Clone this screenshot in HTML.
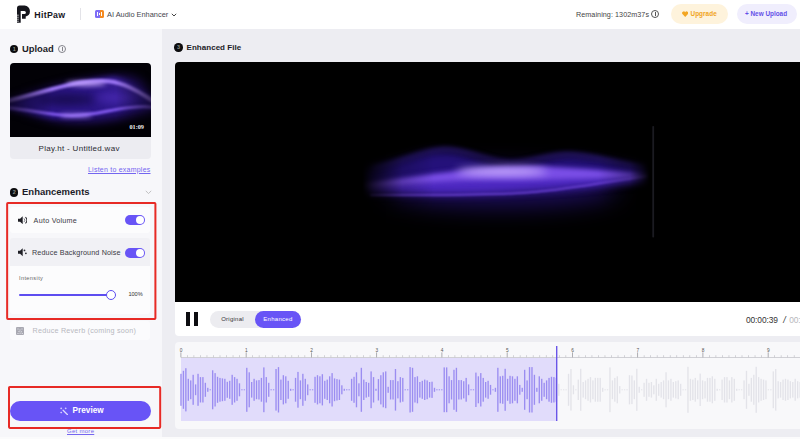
<!DOCTYPE html>
<html><head><meta charset="utf-8">
<style>
*{margin:0;padding:0;box-sizing:border-box}
html,body{width:800px;height:439px;overflow:hidden;background:#ededf2;font-family:"Liberation Sans",sans-serif;color:#1c1c28}
.abs{position:absolute}
#hdr{position:absolute;left:0;top:0;width:800px;height:29px;background:#fff}
#side{position:absolute;left:0;top:29px;width:162px;height:410px;background:#f7f7fa}
.t{position:absolute;white-space:nowrap;line-height:1}
.b{font-weight:bold}
.bul{position:absolute;width:8.4px;height:8.4px;border-radius:50%;background:#0c0c0e;color:#8a8f8a;font-size:5.5px;font-weight:bold;text-align:center;line-height:8.4px}
.tog{position:absolute;width:20px;height:10px;border-radius:5px;background:#6854f6}
.tog i{position:absolute;right:1px;top:1px;width:8px;height:8px;border-radius:50%;background:#fff}
.red{position:absolute;border:1.5px solid #e8252a}
</style></head><body>
<div id="hdr">
 <svg class="abs" style="left:0;top:0" width="40" height="29" viewBox="0 0 40 29"><path d="M17 8.2 Q17 5.6 19.6 5.6 H24.6 A5.3 5.3 0 0 1 29.9 10.9 V11.6 A5 5 0 0 1 25.7 16.5 V18.8 H22 V14.1 H24.3 A1.6 1.6 0 0 0 24.3 10.9 H20.7 V22.7 H17 Z" fill="#15151c"/><path d="M17 15.2h1.8M17 17.2h1.8M17 19.2h1.8M17 21.2h1.8" stroke="#fff" stroke-width=".7"/></svg>
 <div class="t b" style="left:34.3px;top:10.6px;font-size:8.8px;letter-spacing:.3px;color:#16161e">HitPaw</div>
 <div class="abs" style="left:80px;top:8px;width:1px;height:12px;background:#e3e3e8"></div>
 <div class="abs" style="left:95px;top:9.5px;width:4.5px;height:8.5px;background:#7d6cf6;border-radius:1.5px 0 0 1.5px"></div>
 <div class="abs" style="left:99.5px;top:9.5px;width:4.5px;height:8.5px;background:#f58a20;border-radius:0 1.5px 1.5px 0"></div>
 <div class="abs" style="left:97.3px;top:12px;width:1px;height:3.5px;background:#fff"></div><div class="abs" style="left:99.2px;top:12.5px;width:.8px;height:1px;background:#fff"></div><div class="abs" style="left:99.2px;top:14.3px;width:.8px;height:1px;background:#fff"></div><div class="abs" style="left:101px;top:12px;width:1px;height:3.5px;background:#fff"></div>
 <div class="t" style="left:107px;top:10.5px;font-size:7.4px;color:#45454d">AI Audio Enhancer</div>
 <svg class="abs" style="left:171.3px;top:12.8px" width="6" height="4" viewBox="0 0 6 4"><path d="M.8 .8 L3 3 L5.2 .8" fill="none" stroke="#444" stroke-width="1"/></svg>
 <div class="t" style="left:576px;top:10.5px;font-size:7.2px;letter-spacing:.06px;color:#444">Remaining: 1302m37s</div>
 <div class="abs" style="left:651px;top:10px;width:8px;height:8px;border:1px solid #555;border-radius:50%"></div>
 <div class="abs" style="left:654.5px;top:12px;width:1px;height:4px;background:#555"></div>
 <div class="abs" style="left:670.5px;top:4px;width:57.5px;height:19.5px;border-radius:10px;background:#fef3dc"></div>
 <svg class="abs" style="left:682px;top:11px" width="6.4" height="6" viewBox="0 0 12 11"><path d="M6 11 L.8 5.6 A3 3 0 0 1 6 2 A3 3 0 0 1 11.2 5.6 Z" fill="#f3a622"/></svg>
 <div class="t b" style="left:690.5px;top:11px;font-size:6.4px;letter-spacing:.05px;color:#f0a321">Upgrade</div>
 <div class="abs" style="left:737px;top:4px;width:59.5px;height:19.5px;border-radius:10px;background:#f0eefd"></div>
 <div class="t b" style="left:745px;top:11px;font-size:6.4px;color:#6350e8">+ New Upload</div>
</div>
<div id="side"></div>

<!-- Upload -->
<div class="bul" style="left:10px;top:44.5px">1</div>
<div class="t b" style="left:22px;top:43.8px;font-size:9.4px">Upload</div>
<div class="abs" style="left:58px;top:45px;width:8px;height:8px;border:1px solid #85858c;border-radius:50%"></div>
<div class="abs" style="left:61.5px;top:47px;width:1px;height:4px;background:#85858c"></div>

<div class="abs" style="left:10px;top:63px;width:140.5px;height:95.5px;border-radius:4px;background:#ececf1"></div>
<svg class="abs" style="left:10px;top:63px;border-radius:4px 4px 0 0" width="141" height="74" viewBox="0 0.5 141 74">
 <defs><filter color-interpolation-filters="sRGB" id="b0" x="-40%" y="-300%" width="180%" height="700%"><feGaussianBlur stdDeviation="5"/></filter>
 <filter color-interpolation-filters="sRGB" id="b1" x="-30%" y="-300%" width="160%" height="700%"><feGaussianBlur stdDeviation="2.4"/></filter>
 <filter color-interpolation-filters="sRGB" id="b2" x="-20%" y="-80%" width="140%" height="260%"><feGaussianBlur stdDeviation="1.3"/></filter>
 <linearGradient id="tg" x1="0" x2="141" gradientUnits="userSpaceOnUse"><stop offset="0" stop-color="#555"/><stop offset=".3" stop-color="#fff"/><stop offset=".75" stop-color="#fff"/><stop offset="1" stop-color="#666"/></linearGradient>
 <mask id="tm" maskUnits="userSpaceOnUse" x="0" y="0" width="141" height="75"><rect width="141" height="75" fill="url(#tg)"/></mask></defs>
 <rect width="141" height="75" fill="#020106"/>
 <g mask="url(#tm)">
 <path filter="url(#b0)" d="M-5 38 C30 28 60 18 100 14 S135 26 146 36 L146 50 C120 54 90 62 62 60 S20 50 -5 46 Z" fill="#24106c"/>
 <path filter="url(#b1)" d="M-5 40 C25 34 50 24 72 21 S110 20 125 27 S140 36 146 38 L146 46 C120 46 95 52 64 55 S20 50 -5 46 Z" fill="#2c1688"/>
 <ellipse filter="url(#b0)" cx="56" cy="37" rx="30" ry="5" fill="#150a4a"/>
 <ellipse filter="url(#b0)" cx="108" cy="35" rx="22" ry="6" fill="#4527ac"/>
 <path filter="url(#b1)" d="M60 24 C80 18 95 14 105 15 S130 26 146 38 L146 42 C130 38 115 26 95 24 Z" fill="#3a2096"/>
 <path filter="url(#b2)" d="M-5 39 C25 32 50 23 72 20 S105 18 120 25 S138 36 146 40" fill="none" stroke="#9a74f2" stroke-width="4"/>
 <path filter="url(#b2)" d="M-5 45 C20 47 40 53 62 53 S100 47 120 45 S140 45 146 45" fill="none" stroke="#7e56e8" stroke-width="3.2"/>
 <ellipse filter="url(#b1)" cx="76" cy="21" rx="20" ry="2.2" fill="#c8aaff"/>
 <ellipse filter="url(#b1)" cx="66" cy="53" rx="16" ry="1.6" fill="#b08cf8"/>
 </g>
</svg>
<div class="t b" style="left:129.5px;top:123.5px;font-size:6.2px;color:#f4f4f4;font-family:'Liberation Serif',serif">01:09</div>
<div class="t" style="left:38.6px;top:144.7px;font-size:8px;letter-spacing:.3px;color:#2a2a32">Play.ht - Untitled.wav</div>
<div class="t" style="left:88px;top:165.7px;font-size:7px;letter-spacing:.23px;color:#7466f0;text-decoration:underline">Listen to examples</div>

<!-- Enhancements -->
<div class="bul" style="left:10px;top:188.2px">2</div>
<div class="t b" style="left:22px;top:187.4px;font-size:9.5px">Enhancements</div>
<svg class="abs" style="left:144.5px;top:190px" width="7" height="5" viewBox="0 0 7 5"><path d="M.8 .8 L3.5 3.6 L6.2 .8" fill="none" stroke="#bbb" stroke-width=".9"/></svg>

<div class="abs" style="left:10px;top:207px;width:140px;height:26px;background:#fcfcfd;border-radius:3px"></div>
<div class="abs" style="left:10px;top:238px;width:140px;height:28px;background:#f1f1f5;border-radius:3px 3px 0 0"></div>
<div class="abs" style="left:10px;top:266px;width:140px;height:48px;background:#fcfcfd;border-radius:0 0 3px 3px"></div>
<div class="abs" style="left:10px;top:321px;width:140px;height:19px;background:#fbfbfd;border-radius:3px"></div>

<svg class="abs" style="left:17.6px;top:215.9px" width="9.4" height="8.5" viewBox="0 0 10 9"><path d="M0 2.9 H2.2 L5 .3 V8.7 L2.2 6.1 H0 Z" fill="#1e1e24"/><path d="M6.3 2.5 A2.8 2.8 0 0 1 6.3 6.5" fill="none" stroke="#77777e" stroke-width="1"/><path d="M7.9 1.1 A4.4 4.4 0 0 1 7.9 7.9" fill="none" stroke="#2a2a30" stroke-width="1.1"/></svg>
<div class="t" style="left:33.6px;top:216.5px;font-size:7.2px;letter-spacing:.25px;color:#3a3a44">Auto Volume</div>
<div class="tog" style="left:125px;top:215px"><i></i></div>

<svg class="abs" style="left:18px;top:248.4px" width="9.4" height="8.5" viewBox="0 0 10 9"><path d="M0 2.9 H2.2 L5 .3 V8.7 L2.2 6.1 H0 Z" fill="#1e1e24"/><circle cx="6.9" cy="2.6" r=".95" fill="#2a2a30"/><circle cx="8.4" cy="5.6" r=".95" fill="#2a2a30"/></svg>
<div class="t" style="left:32px;top:249.3px;font-size:7.2px;letter-spacing:.14px;color:#3a3a44">Reduce Background Noise</div>
<div class="tog" style="left:125px;top:248px"><i></i></div>

<div class="t" style="left:19px;top:276px;font-size:5.6px;letter-spacing:.38px;color:#666">Intensity</div>
<div class="abs" style="left:19px;top:293.6px;width:89px;height:2.6px;border-radius:1.3px;background:#5d4df0"></div>
<div class="abs" style="left:105.6px;top:289.6px;width:10px;height:10px;border-radius:50%;background:#fff;border:1.2px solid #5d4df0"></div>
<div class="t" style="left:128.4px;top:292px;font-size:5.6px;color:#333">100%</div>

<svg class="abs" style="left:16.4px;top:327px" width="8" height="8" viewBox="0 0 8 8"><rect width="8" height="8" rx="1" fill="#a9a9b2"/><path d="M1.5 1.5h1v1h-1zM3.5 2.5h1v1h-1zM5.5 1.5h1v1h-1zM2.5 4h1v1h-1zM4.8 4.2h1v1h-1zM1.5 6h1v1h-1zM3.6 5.8h1v1h-1zM5.8 6h1v1h-1z" fill="#e8e8ee"/></svg>
<div class="t" style="left:32.6px;top:326.9px;font-size:7.2px;letter-spacing:.22px;color:#b8b8c0">Reduce Reverb (coming soon)</div>

<svg class="abs" style="left:0;top:190px" width="170" height="250" viewBox="0 190 170 250"><rect x="7.15" y="203" width="148.25" height="116" rx=".8" fill="none" stroke="#e72a25" stroke-width="2"/><rect x="9" y="386.9" width="151.2" height="41" rx=".8" fill="none" stroke="#e72a25" stroke-width="2"/></svg>

<!-- Preview -->
<div class="abs" style="left:10px;top:401.2px;width:141.2px;height:20px;border-radius:10px;background:#6854f6"></div>
<svg class="abs" style="left:59.5px;top:406.6px" width="8.6" height="8.6" viewBox="0 0 10 10"><path d="M3.6 3.8 L8.8 9" stroke="#ddd8ff" stroke-width="1.5" stroke-linecap="round"/><path d="M1.4 .6v2M.4 1.6h2M6.6 .6v2M5.6 1.6h2M1.4 5.4v2M.4 6.4h2" stroke="#ddd8ff" stroke-width=".9"/></svg>
<div class="t b" style="left:72.5px;top:406.8px;font-size:8.2px;letter-spacing:.04px;color:#fff">Preview</div>
<div class="t" style="left:67px;top:427.9px;font-size:6px;letter-spacing:.28px;color:#7466f0;text-decoration:underline">Get more</div>


<!-- main -->
<div class="bul" style="left:174.3px;top:43.4px">3</div>
<div class="t b" style="left:186.5px;top:43.7px;font-size:8px;letter-spacing:.04px">Enhanced File</div>

<div class="abs" style="left:174.6px;top:61.8px;width:626px;height:240.6px;background:#000;border-radius:4px 0 0 0"></div>
<svg class="abs" style="left:174px;top:61px" width="626" height="242" viewBox="174 61 626 242">
 <defs><filter color-interpolation-filters="sRGB" id="c0" x="-30%" y="-300%" width="160%" height="700%"><feGaussianBlur stdDeviation="12"/></filter>
 <filter color-interpolation-filters="sRGB" id="c1" x="-20%" y="-100%" width="140%" height="300%"><feGaussianBlur stdDeviation="5"/></filter>
 <filter color-interpolation-filters="sRGB" id="c2" x="-20%" y="-100%" width="140%" height="300%"><feGaussianBlur stdDeviation="2.5"/></filter>
 <filter color-interpolation-filters="sRGB" id="c4" x="-20%" y="-100%" width="140%" height="300%"><feGaussianBlur stdDeviation="1.3"/></filter>
 <filter color-interpolation-filters="sRGB" id="c3" x="-30%" y="-300%" width="160%" height="700%"><feGaussianBlur stdDeviation="4"/></filter>
 <linearGradient id="mg" x1="362" x2="650" gradientUnits="userSpaceOnUse"><stop offset="0" stop-color="#000"/><stop offset=".04" stop-color="#444"/><stop offset=".14" stop-color="#ccc"/><stop offset=".25" stop-color="#fff"/><stop offset=".82" stop-color="#fff"/><stop offset=".93" stop-color="#bbb"/><stop offset="1" stop-color="#000"/></linearGradient>
 <mask id="mk" maskUnits="userSpaceOnUse" x="174" y="61" width="626" height="242"><rect x="362" y="61" width="288" height="242" fill="url(#mg)"/></mask></defs>
 <g mask="url(#mk)">
  <ellipse filter="url(#c0)" cx="500" cy="188" rx="120" ry="18" fill="#1e0e60"/>
  <path filter="url(#c1)" d="M360 170 C400 162 422 151 444 151 S490 167 510 167 S548 156 568 156 S620 164 650 168 L650 180 C620 184 590 186 560 188 S470 190 440 190 S390 188 360 190 Z" fill="#24117a"/>
  <path d="M372 168 C405 161 424 149 446 149 S490 162 510 162 S548 154 568 154 S615 162 645 168" fill="none" stroke="#3c2498" stroke-width="1.8" filter="url(#c2)"/>
  <path filter="url(#c3)" d="M365 185 C400 181 450 175 500 173 S600 174 650 176 L650 179 C610 184 575 188 510 192 S400 192 365 193 Z" fill="#4e29c2"/>
  <path filter="url(#c2)" d="M362 184 C400 180 450 170 500 167 S600 171 650 175 L650 177 C600 178 560 180 500 180 S400 186 362 187 Z" fill="#7a4ee6"/>
  <path filter="url(#c4)" d="M370 195 C420 195 470 196 520 193 S600 182 648 176" fill="none" stroke="#7448e0" stroke-width="1.5"/>
  <ellipse filter="url(#c3)" cx="502" cy="171.5" rx="46" ry="3.5" fill="#d4baff"/>
 </g>
 <rect x="652.3" y="126" width="1.8" height="111.5" rx=".8" fill="#1b1b21"/>
</svg>

<div class="abs" style="left:174.6px;top:302.4px;width:626px;height:33.3px;background:#fff;border-radius:0 0 0 4px"></div>
<div class="abs" style="left:186px;top:312px;width:4px;height:14px;background:#0c0c10"></div>
<div class="abs" style="left:194px;top:312px;width:4px;height:14px;background:#0c0c10"></div>
<div class="abs" style="left:209.5px;top:310.5px;width:91px;height:17.5px;border-radius:9px;background:#ececf0"></div>
<div class="abs" style="left:254.5px;top:310.5px;width:46px;height:17.5px;border-radius:9px;background:#6854f6"></div>
<div class="t" style="left:221.2px;top:316px;font-size:6px;letter-spacing:.25px;color:#333">Original</div>
<div class="t" style="left:263.2px;top:316px;font-size:6px;letter-spacing:.3px;color:#fff">Enhanced</div>
<div class="t" style="left:746px;top:315.7px;font-size:8.4px;letter-spacing:-.1px;color:#333">00:00:39</div>
<div class="t" style="left:783.2px;top:315.5px;font-size:8.8px;font-style:italic;color:#333">/</div>
<div class="t" style="left:789.2px;top:315.7px;font-size:8.4px;letter-spacing:-.1px;color:#b8b8bc">00:01:09</div>

<div class="abs" style="left:174.6px;top:341.7px;width:626px;height:87.2px;background:#f8f8fa;border-radius:4px 0 0 4px"></div>
<div class="abs" style="left:180.5px;top:358.4px;width:376px;height:62.2px;background:#e1dcfb"></div>
<div class="abs" style="left:180.5px;top:357px;width:620px;height:1px;background:#d0d0d5"></div>
<svg class="abs" style="left:0;top:0" width="800" height="439" viewBox="0 0 800 439">
<rect x="180.50" y="352.4" width="0.8" height="5" fill="#9a9aa0"/><text x="179.80" y="351.5" font-size="4.8" fill="#555" font-family="Liberation Sans">0</text><rect x="187.03" y="355.2" width="0.7" height="2.2" fill="#c2c2c8"/><rect x="193.55" y="355.2" width="0.7" height="2.2" fill="#c2c2c8"/><rect x="200.07" y="355.2" width="0.7" height="2.2" fill="#c2c2c8"/><rect x="206.60" y="355.2" width="0.7" height="2.2" fill="#c2c2c8"/><rect x="213.12" y="355.2" width="0.7" height="2.2" fill="#c2c2c8"/><rect x="219.65" y="355.2" width="0.7" height="2.2" fill="#c2c2c8"/><rect x="226.18" y="355.2" width="0.7" height="2.2" fill="#c2c2c8"/><rect x="232.70" y="355.2" width="0.7" height="2.2" fill="#c2c2c8"/><rect x="239.22" y="355.2" width="0.7" height="2.2" fill="#c2c2c8"/><rect x="245.75" y="352.4" width="0.8" height="5" fill="#9a9aa0"/><text x="245.05" y="351.5" font-size="4.8" fill="#555" font-family="Liberation Sans">1</text><rect x="252.28" y="355.2" width="0.7" height="2.2" fill="#c2c2c8"/><rect x="258.80" y="355.2" width="0.7" height="2.2" fill="#c2c2c8"/><rect x="265.32" y="355.2" width="0.7" height="2.2" fill="#c2c2c8"/><rect x="271.85" y="355.2" width="0.7" height="2.2" fill="#c2c2c8"/><rect x="278.38" y="355.2" width="0.7" height="2.2" fill="#c2c2c8"/><rect x="284.90" y="355.2" width="0.7" height="2.2" fill="#c2c2c8"/><rect x="291.43" y="355.2" width="0.7" height="2.2" fill="#c2c2c8"/><rect x="297.95" y="355.2" width="0.7" height="2.2" fill="#c2c2c8"/><rect x="304.48" y="355.2" width="0.7" height="2.2" fill="#c2c2c8"/><rect x="311.00" y="352.4" width="0.8" height="5" fill="#9a9aa0"/><text x="310.30" y="351.5" font-size="4.8" fill="#555" font-family="Liberation Sans">2</text><rect x="317.52" y="355.2" width="0.7" height="2.2" fill="#c2c2c8"/><rect x="324.05" y="355.2" width="0.7" height="2.2" fill="#c2c2c8"/><rect x="330.58" y="355.2" width="0.7" height="2.2" fill="#c2c2c8"/><rect x="337.10" y="355.2" width="0.7" height="2.2" fill="#c2c2c8"/><rect x="343.62" y="355.2" width="0.7" height="2.2" fill="#c2c2c8"/><rect x="350.15" y="355.2" width="0.7" height="2.2" fill="#c2c2c8"/><rect x="356.68" y="355.2" width="0.7" height="2.2" fill="#c2c2c8"/><rect x="363.20" y="355.2" width="0.7" height="2.2" fill="#c2c2c8"/><rect x="369.73" y="355.2" width="0.7" height="2.2" fill="#c2c2c8"/><rect x="376.25" y="352.4" width="0.8" height="5" fill="#9a9aa0"/><text x="375.55" y="351.5" font-size="4.8" fill="#555" font-family="Liberation Sans">3</text><rect x="382.77" y="355.2" width="0.7" height="2.2" fill="#c2c2c8"/><rect x="389.30" y="355.2" width="0.7" height="2.2" fill="#c2c2c8"/><rect x="395.83" y="355.2" width="0.7" height="2.2" fill="#c2c2c8"/><rect x="402.35" y="355.2" width="0.7" height="2.2" fill="#c2c2c8"/><rect x="408.88" y="355.2" width="0.7" height="2.2" fill="#c2c2c8"/><rect x="415.40" y="355.2" width="0.7" height="2.2" fill="#c2c2c8"/><rect x="421.93" y="355.2" width="0.7" height="2.2" fill="#c2c2c8"/><rect x="428.45" y="355.2" width="0.7" height="2.2" fill="#c2c2c8"/><rect x="434.98" y="355.2" width="0.7" height="2.2" fill="#c2c2c8"/><rect x="441.50" y="352.4" width="0.8" height="5" fill="#9a9aa0"/><text x="440.80" y="351.5" font-size="4.8" fill="#555" font-family="Liberation Sans">4</text><rect x="448.03" y="355.2" width="0.7" height="2.2" fill="#c2c2c8"/><rect x="454.55" y="355.2" width="0.7" height="2.2" fill="#c2c2c8"/><rect x="461.07" y="355.2" width="0.7" height="2.2" fill="#c2c2c8"/><rect x="467.60" y="355.2" width="0.7" height="2.2" fill="#c2c2c8"/><rect x="474.12" y="355.2" width="0.7" height="2.2" fill="#c2c2c8"/><rect x="480.65" y="355.2" width="0.7" height="2.2" fill="#c2c2c8"/><rect x="487.18" y="355.2" width="0.7" height="2.2" fill="#c2c2c8"/><rect x="493.70" y="355.2" width="0.7" height="2.2" fill="#c2c2c8"/><rect x="500.23" y="355.2" width="0.7" height="2.2" fill="#c2c2c8"/><rect x="506.75" y="352.4" width="0.8" height="5" fill="#9a9aa0"/><text x="506.05" y="351.5" font-size="4.8" fill="#555" font-family="Liberation Sans">5</text><rect x="513.28" y="355.2" width="0.7" height="2.2" fill="#c2c2c8"/><rect x="519.80" y="355.2" width="0.7" height="2.2" fill="#c2c2c8"/><rect x="526.33" y="355.2" width="0.7" height="2.2" fill="#c2c2c8"/><rect x="532.85" y="355.2" width="0.7" height="2.2" fill="#c2c2c8"/><rect x="539.38" y="355.2" width="0.7" height="2.2" fill="#c2c2c8"/><rect x="545.90" y="355.2" width="0.7" height="2.2" fill="#c2c2c8"/><rect x="552.42" y="355.2" width="0.7" height="2.2" fill="#c2c2c8"/><rect x="558.95" y="355.2" width="0.7" height="2.2" fill="#c2c2c8"/><rect x="565.48" y="355.2" width="0.7" height="2.2" fill="#c2c2c8"/><rect x="572.00" y="352.4" width="0.8" height="5" fill="#9a9aa0"/><text x="571.30" y="351.5" font-size="4.8" fill="#555" font-family="Liberation Sans">6</text><rect x="578.53" y="355.2" width="0.7" height="2.2" fill="#c2c2c8"/><rect x="585.05" y="355.2" width="0.7" height="2.2" fill="#c2c2c8"/><rect x="591.58" y="355.2" width="0.7" height="2.2" fill="#c2c2c8"/><rect x="598.10" y="355.2" width="0.7" height="2.2" fill="#c2c2c8"/><rect x="604.62" y="355.2" width="0.7" height="2.2" fill="#c2c2c8"/><rect x="611.15" y="355.2" width="0.7" height="2.2" fill="#c2c2c8"/><rect x="617.67" y="355.2" width="0.7" height="2.2" fill="#c2c2c8"/><rect x="624.20" y="355.2" width="0.7" height="2.2" fill="#c2c2c8"/><rect x="630.73" y="355.2" width="0.7" height="2.2" fill="#c2c2c8"/><rect x="637.25" y="352.4" width="0.8" height="5" fill="#9a9aa0"/><text x="636.55" y="351.5" font-size="4.8" fill="#555" font-family="Liberation Sans">7</text><rect x="643.78" y="355.2" width="0.7" height="2.2" fill="#c2c2c8"/><rect x="650.30" y="355.2" width="0.7" height="2.2" fill="#c2c2c8"/><rect x="656.83" y="355.2" width="0.7" height="2.2" fill="#c2c2c8"/><rect x="663.35" y="355.2" width="0.7" height="2.2" fill="#c2c2c8"/><rect x="669.88" y="355.2" width="0.7" height="2.2" fill="#c2c2c8"/><rect x="676.40" y="355.2" width="0.7" height="2.2" fill="#c2c2c8"/><rect x="682.92" y="355.2" width="0.7" height="2.2" fill="#c2c2c8"/><rect x="689.45" y="355.2" width="0.7" height="2.2" fill="#c2c2c8"/><rect x="695.98" y="355.2" width="0.7" height="2.2" fill="#c2c2c8"/><rect x="702.50" y="352.4" width="0.8" height="5" fill="#9a9aa0"/><text x="701.80" y="351.5" font-size="4.8" fill="#555" font-family="Liberation Sans">8</text><rect x="709.02" y="355.2" width="0.7" height="2.2" fill="#c2c2c8"/><rect x="715.55" y="355.2" width="0.7" height="2.2" fill="#c2c2c8"/><rect x="722.08" y="355.2" width="0.7" height="2.2" fill="#c2c2c8"/><rect x="728.60" y="355.2" width="0.7" height="2.2" fill="#c2c2c8"/><rect x="735.12" y="355.2" width="0.7" height="2.2" fill="#c2c2c8"/><rect x="741.65" y="355.2" width="0.7" height="2.2" fill="#c2c2c8"/><rect x="748.18" y="355.2" width="0.7" height="2.2" fill="#c2c2c8"/><rect x="754.70" y="355.2" width="0.7" height="2.2" fill="#c2c2c8"/><rect x="761.23" y="355.2" width="0.7" height="2.2" fill="#c2c2c8"/><rect x="767.75" y="352.4" width="0.8" height="5" fill="#9a9aa0"/><text x="767.05" y="351.5" font-size="4.8" fill="#555" font-family="Liberation Sans">9</text><rect x="774.27" y="355.2" width="0.7" height="2.2" fill="#c2c2c8"/><rect x="780.80" y="355.2" width="0.7" height="2.2" fill="#c2c2c8"/><rect x="787.33" y="355.2" width="0.7" height="2.2" fill="#c2c2c8"/><rect x="793.85" y="355.2" width="0.7" height="2.2" fill="#c2c2c8"/>
<g fill="#9b8df1"><rect x="180.30" y="373.8" width="1.35" height="32.0"/><rect x="182.74" y="370.8" width="1.35" height="38.0"/><rect x="185.18" y="368.2" width="1.35" height="43.2"/><rect x="187.61" y="378.8" width="1.35" height="22.0"/><rect x="190.05" y="380.4" width="1.35" height="18.8"/><rect x="192.49" y="374.8" width="1.35" height="30.0"/><rect x="194.93" y="384.4" width="1.35" height="10.8"/><rect x="197.36" y="373.8" width="1.35" height="32.0"/><rect x="199.80" y="377.1" width="1.35" height="25.4"/><rect x="202.24" y="377.1" width="1.35" height="25.4"/><rect x="204.68" y="382.8" width="1.35" height="14.0"/><rect x="207.11" y="387.8" width="1.35" height="4.0"/><rect x="209.55" y="389.3" width="1.35" height="1.0"/><rect x="211.99" y="370.3" width="1.35" height="39.0"/><rect x="214.43" y="373.1" width="1.35" height="33.4"/><rect x="216.86" y="376.8" width="1.35" height="26.0"/><rect x="219.30" y="377.9" width="1.35" height="23.8"/><rect x="221.74" y="378.4" width="1.35" height="22.8"/><rect x="224.18" y="378.8" width="1.35" height="22.0"/><rect x="226.61" y="381.8" width="1.35" height="16.0"/><rect x="229.05" y="380.8" width="1.35" height="18.0"/><rect x="231.49" y="374.8" width="1.35" height="30.0"/><rect x="233.93" y="377.1" width="1.35" height="25.4"/><rect x="236.36" y="378.8" width="1.35" height="22.0"/><rect x="238.80" y="383.3" width="1.35" height="13.0"/><rect x="241.24" y="389.3" width="1.35" height="1.0"/><rect x="243.68" y="389.3" width="1.35" height="1.0"/><rect x="246.11" y="367.8" width="1.35" height="44.0"/><rect x="248.55" y="372.3" width="1.35" height="35.0"/><rect x="250.99" y="382.0" width="1.35" height="15.6"/><rect x="253.43" y="378.8" width="1.35" height="22.0"/><rect x="255.86" y="380.4" width="1.35" height="18.8"/><rect x="258.30" y="380.1" width="1.35" height="19.4"/><rect x="260.74" y="377.9" width="1.35" height="23.8"/><rect x="263.18" y="367.4" width="1.35" height="44.8"/><rect x="265.61" y="377.1" width="1.35" height="25.4"/><rect x="268.05" y="382.8" width="1.35" height="14.0"/><rect x="270.49" y="389.3" width="1.35" height="1.0"/><rect x="272.93" y="389.3" width="1.35" height="1.0"/><rect x="275.36" y="369.0" width="1.35" height="41.6"/><rect x="277.80" y="367.1" width="1.35" height="45.4"/><rect x="280.24" y="379.6" width="1.35" height="20.4"/><rect x="282.68" y="375.2" width="1.35" height="29.2"/><rect x="285.11" y="376.3" width="1.35" height="27.0"/><rect x="287.55" y="380.8" width="1.35" height="18.0"/><rect x="289.99" y="388.8" width="1.35" height="2.0"/><rect x="292.43" y="389.3" width="1.35" height="1.0"/><rect x="294.86" y="377.9" width="1.35" height="23.8"/><rect x="297.30" y="371.9" width="1.35" height="35.8"/><rect x="299.74" y="380.4" width="1.35" height="18.8"/><rect x="302.18" y="373.8" width="1.35" height="32.0"/><rect x="304.61" y="378.8" width="1.35" height="22.0"/><rect x="307.05" y="384.4" width="1.35" height="10.8"/><rect x="309.49" y="389.3" width="1.35" height="1.0"/><rect x="311.93" y="389.3" width="1.35" height="1.0"/><rect x="314.36" y="376.8" width="1.35" height="26.0"/><rect x="316.80" y="375.2" width="1.35" height="29.2"/><rect x="319.24" y="376.3" width="1.35" height="27.0"/><rect x="321.68" y="374.2" width="1.35" height="31.2"/><rect x="324.11" y="380.8" width="1.35" height="18.0"/><rect x="326.55" y="379.6" width="1.35" height="20.4"/><rect x="328.99" y="376.3" width="1.35" height="27.0"/><rect x="331.43" y="373.1" width="1.35" height="33.4"/><rect x="333.86" y="378.4" width="1.35" height="22.8"/><rect x="336.30" y="379.1" width="1.35" height="21.4"/><rect x="338.74" y="379.6" width="1.35" height="20.4"/><rect x="341.18" y="385.3" width="1.35" height="9.0"/><rect x="343.61" y="388.8" width="1.35" height="2.0"/><rect x="346.05" y="389.3" width="1.35" height="1.0"/><rect x="348.49" y="389.3" width="1.35" height="1.0"/><rect x="350.93" y="378.8" width="1.35" height="22.0"/><rect x="353.36" y="376.8" width="1.35" height="26.0"/><rect x="355.80" y="372.3" width="1.35" height="35.0"/><rect x="358.24" y="383.3" width="1.35" height="13.0"/><rect x="360.68" y="367.8" width="1.35" height="44.0"/><rect x="363.11" y="379.6" width="1.35" height="20.4"/><rect x="365.55" y="382.0" width="1.35" height="15.6"/><rect x="367.99" y="382.8" width="1.35" height="14.0"/><rect x="370.43" y="371.4" width="1.35" height="36.8"/><rect x="372.86" y="377.1" width="1.35" height="25.4"/><rect x="375.30" y="388.8" width="1.35" height="2.0"/><rect x="377.74" y="379.1" width="1.35" height="21.4"/><rect x="380.18" y="375.2" width="1.35" height="29.2"/><rect x="382.61" y="372.3" width="1.35" height="35.0"/><rect x="385.05" y="371.4" width="1.35" height="36.8"/><rect x="387.49" y="386.8" width="1.35" height="6.0"/><rect x="389.93" y="380.1" width="1.35" height="19.4"/><rect x="392.36" y="380.1" width="1.35" height="19.4"/><rect x="394.80" y="369.0" width="1.35" height="41.6"/><rect x="397.24" y="381.2" width="1.35" height="17.2"/><rect x="399.68" y="377.1" width="1.35" height="25.4"/><rect x="402.11" y="377.9" width="1.35" height="23.8"/><rect x="404.55" y="389.3" width="1.35" height="1.0"/><rect x="406.99" y="389.3" width="1.35" height="1.0"/><rect x="409.43" y="367.1" width="1.35" height="45.4"/><rect x="411.86" y="367.8" width="1.35" height="44.0"/><rect x="414.30" y="377.1" width="1.35" height="25.4"/><rect x="416.74" y="376.3" width="1.35" height="27.0"/><rect x="419.18" y="382.0" width="1.35" height="15.6"/><rect x="421.61" y="380.8" width="1.35" height="18.0"/><rect x="424.05" y="379.6" width="1.35" height="20.4"/><rect x="426.49" y="380.4" width="1.35" height="18.8"/><rect x="428.93" y="382.0" width="1.35" height="15.6"/><rect x="431.36" y="381.7" width="1.35" height="16.2"/><rect x="433.80" y="387.8" width="1.35" height="4.0"/><rect x="436.24" y="389.3" width="1.35" height="1.0"/><rect x="438.68" y="389.3" width="1.35" height="1.0"/><rect x="441.11" y="389.3" width="1.35" height="1.0"/><rect x="443.55" y="367.4" width="1.35" height="44.8"/><rect x="445.99" y="367.4" width="1.35" height="44.8"/><rect x="448.43" y="376.3" width="1.35" height="27.0"/><rect x="450.86" y="380.1" width="1.35" height="19.4"/><rect x="453.30" y="369.8" width="1.35" height="40.0"/><rect x="455.74" y="367.8" width="1.35" height="44.0"/><rect x="458.18" y="380.1" width="1.35" height="19.4"/><rect x="460.61" y="380.1" width="1.35" height="19.4"/><rect x="463.05" y="381.2" width="1.35" height="17.2"/><rect x="465.49" y="377.9" width="1.35" height="23.8"/><rect x="467.93" y="384.4" width="1.35" height="10.8"/><rect x="470.36" y="389.3" width="1.35" height="1.0"/><rect x="472.80" y="389.3" width="1.35" height="1.0"/><rect x="475.24" y="372.6" width="1.35" height="34.4"/><rect x="477.68" y="376.3" width="1.35" height="27.0"/><rect x="480.11" y="373.1" width="1.35" height="33.4"/><rect x="482.55" y="377.9" width="1.35" height="23.8"/><rect x="484.99" y="382.0" width="1.35" height="15.6"/><rect x="487.43" y="380.8" width="1.35" height="18.0"/><rect x="489.86" y="384.9" width="1.35" height="9.8"/><rect x="492.30" y="389.3" width="1.35" height="1.0"/><rect x="494.74" y="387.8" width="1.35" height="4.0"/><rect x="497.18" y="367.8" width="1.35" height="44.0"/><rect x="499.61" y="376.3" width="1.35" height="27.0"/><rect x="502.05" y="375.8" width="1.35" height="28.0"/><rect x="504.49" y="368.8" width="1.35" height="42.0"/><rect x="506.93" y="378.8" width="1.35" height="22.0"/><rect x="509.36" y="375.8" width="1.35" height="28.0"/><rect x="511.80" y="376.3" width="1.35" height="27.0"/><rect x="514.24" y="378.8" width="1.35" height="22.0"/><rect x="516.67" y="376.3" width="1.35" height="27.0"/><rect x="519.11" y="384.9" width="1.35" height="9.8"/><rect x="521.55" y="387.8" width="1.35" height="4.0"/><rect x="523.99" y="369.8" width="1.35" height="40.0"/><rect x="526.42" y="380.4" width="1.35" height="18.8"/><rect x="528.86" y="367.1" width="1.35" height="45.4"/><rect x="531.30" y="367.1" width="1.35" height="45.4"/><rect x="533.74" y="374.8" width="1.35" height="30.0"/><rect x="536.17" y="387.8" width="1.35" height="4.0"/><rect x="538.61" y="376.3" width="1.35" height="27.0"/><rect x="541.05" y="378.8" width="1.35" height="22.0"/><rect x="543.49" y="382.8" width="1.35" height="14.0"/><rect x="545.92" y="380.4" width="1.35" height="18.8"/><rect x="548.36" y="377.9" width="1.35" height="23.8"/><rect x="550.80" y="376.8" width="1.35" height="26.0"/><rect x="553.24" y="377.1" width="1.35" height="25.4"/><rect x="555.67" y="377.8" width="1.35" height="24.0"/></g><g fill="#e3e3e9"><rect x="558.11" y="383.8" width="1.35" height="12.0"/><rect x="560.55" y="389.3" width="1.35" height="1.0"/><rect x="562.99" y="389.3" width="1.35" height="1.0"/><rect x="565.42" y="389.3" width="1.35" height="1.0"/><rect x="567.86" y="373.8" width="1.35" height="32.0"/><rect x="570.30" y="369.0" width="1.35" height="41.6"/><rect x="572.74" y="385.3" width="1.35" height="9.0"/><rect x="575.17" y="389.3" width="1.35" height="1.0"/><rect x="577.61" y="379.6" width="1.35" height="20.4"/><rect x="580.05" y="368.8" width="1.35" height="42.0"/><rect x="582.49" y="382.0" width="1.35" height="15.6"/><rect x="584.92" y="380.4" width="1.35" height="18.8"/><rect x="587.36" y="378.8" width="1.35" height="22.0"/><rect x="589.80" y="377.1" width="1.35" height="25.4"/><rect x="592.24" y="380.4" width="1.35" height="18.8"/><rect x="594.67" y="377.9" width="1.35" height="23.8"/><rect x="597.11" y="377.9" width="1.35" height="23.8"/><rect x="599.55" y="377.9" width="1.35" height="23.8"/><rect x="601.99" y="387.8" width="1.35" height="4.0"/><rect x="604.42" y="389.3" width="1.35" height="1.0"/><rect x="606.86" y="389.3" width="1.35" height="1.0"/><rect x="609.30" y="367.4" width="1.35" height="44.8"/><rect x="611.74" y="380.4" width="1.35" height="18.8"/><rect x="614.17" y="377.9" width="1.35" height="23.8"/><rect x="616.61" y="376.3" width="1.35" height="27.0"/><rect x="619.05" y="386.1" width="1.35" height="7.4"/><rect x="621.49" y="389.3" width="1.35" height="1.0"/><rect x="623.92" y="389.3" width="1.35" height="1.0"/><rect x="626.36" y="389.3" width="1.35" height="1.0"/><rect x="628.80" y="375.2" width="1.35" height="29.2"/><rect x="631.24" y="375.5" width="1.35" height="28.6"/><rect x="633.67" y="380.4" width="1.35" height="18.8"/><rect x="636.11" y="368.8" width="1.35" height="42.0"/><rect x="638.55" y="386.8" width="1.35" height="6.0"/><rect x="640.99" y="389.3" width="1.35" height="1.0"/><rect x="643.42" y="382.8" width="1.35" height="14.0"/><rect x="645.86" y="378.8" width="1.35" height="22.0"/><rect x="648.30" y="382.8" width="1.35" height="14.0"/><rect x="650.74" y="382.0" width="1.35" height="15.6"/><rect x="653.17" y="385.3" width="1.35" height="9.0"/><rect x="655.61" y="378.8" width="1.35" height="22.0"/><rect x="658.05" y="383.8" width="1.35" height="12.0"/><rect x="660.49" y="382.0" width="1.35" height="15.6"/><rect x="662.92" y="380.4" width="1.35" height="18.8"/><rect x="665.36" y="372.3" width="1.35" height="35.0"/><rect x="667.80" y="380.4" width="1.35" height="18.8"/><rect x="670.24" y="378.8" width="1.35" height="22.0"/><rect x="672.67" y="382.0" width="1.35" height="15.6"/><rect x="675.11" y="381.2" width="1.35" height="17.2"/><rect x="677.55" y="380.4" width="1.35" height="18.8"/><rect x="679.99" y="383.8" width="1.35" height="12.0"/><rect x="682.42" y="389.3" width="1.35" height="1.0"/><rect x="684.86" y="389.3" width="1.35" height="1.0"/><rect x="687.30" y="366.8" width="1.35" height="46.0"/><rect x="689.74" y="378.8" width="1.35" height="22.0"/><rect x="692.17" y="379.6" width="1.35" height="20.4"/><rect x="694.61" y="377.9" width="1.35" height="23.8"/><rect x="697.05" y="380.4" width="1.35" height="18.8"/><rect x="699.49" y="373.6" width="1.35" height="32.4"/><rect x="701.92" y="380.4" width="1.35" height="18.8"/><rect x="704.36" y="381.2" width="1.35" height="17.2"/><rect x="706.80" y="377.9" width="1.35" height="23.8"/><rect x="709.24" y="377.9" width="1.35" height="23.8"/><rect x="711.67" y="376.3" width="1.35" height="27.0"/><rect x="714.11" y="378.8" width="1.35" height="22.0"/><rect x="716.55" y="388.8" width="1.35" height="2.0"/><rect x="718.99" y="389.3" width="1.35" height="1.0"/><rect x="721.42" y="379.6" width="1.35" height="20.4"/><rect x="723.86" y="377.1" width="1.35" height="25.4"/><rect x="726.30" y="377.1" width="1.35" height="25.4"/><rect x="728.74" y="380.4" width="1.35" height="18.8"/><rect x="731.17" y="377.1" width="1.35" height="25.4"/><rect x="733.61" y="378.8" width="1.35" height="22.0"/><rect x="736.05" y="388.8" width="1.35" height="2.0"/><rect x="738.49" y="389.3" width="1.35" height="1.0"/><rect x="740.92" y="389.3" width="1.35" height="1.0"/><rect x="743.36" y="380.4" width="1.35" height="18.8"/><rect x="745.80" y="370.8" width="1.35" height="38.0"/><rect x="748.24" y="383.8" width="1.35" height="12.0"/><rect x="750.67" y="377.9" width="1.35" height="23.8"/><rect x="753.11" y="374.8" width="1.35" height="30.0"/><rect x="755.55" y="366.8" width="1.35" height="46.0"/><rect x="757.99" y="377.1" width="1.35" height="25.4"/><rect x="760.42" y="378.8" width="1.35" height="22.0"/><rect x="762.86" y="379.6" width="1.35" height="20.4"/><rect x="765.30" y="380.4" width="1.35" height="18.8"/><rect x="767.74" y="389.3" width="1.35" height="1.0"/><rect x="770.17" y="389.3" width="1.35" height="1.0"/><rect x="772.61" y="371.4" width="1.35" height="36.8"/><rect x="775.05" y="369.0" width="1.35" height="41.6"/><rect x="777.49" y="381.2" width="1.35" height="17.2"/><rect x="779.92" y="382.0" width="1.35" height="15.6"/><rect x="782.36" y="379.6" width="1.35" height="20.4"/><rect x="784.80" y="378.8" width="1.35" height="22.0"/><rect x="787.24" y="379.6" width="1.35" height="20.4"/><rect x="789.67" y="381.2" width="1.35" height="17.2"/><rect x="792.11" y="382.0" width="1.35" height="15.6"/><rect x="794.55" y="378.8" width="1.35" height="22.0"/><rect x="796.99" y="381.2" width="1.35" height="17.2"/><rect x="799.42" y="382.0" width="1.35" height="15.6"/></g>
<rect x="556" y="346" width="1.4" height="75" fill="#6a55e8"/>
</svg>
<div class="abs" style="left:0;top:437px;width:800px;height:2px;background:#fbfbfc"></div>
</body></html>
